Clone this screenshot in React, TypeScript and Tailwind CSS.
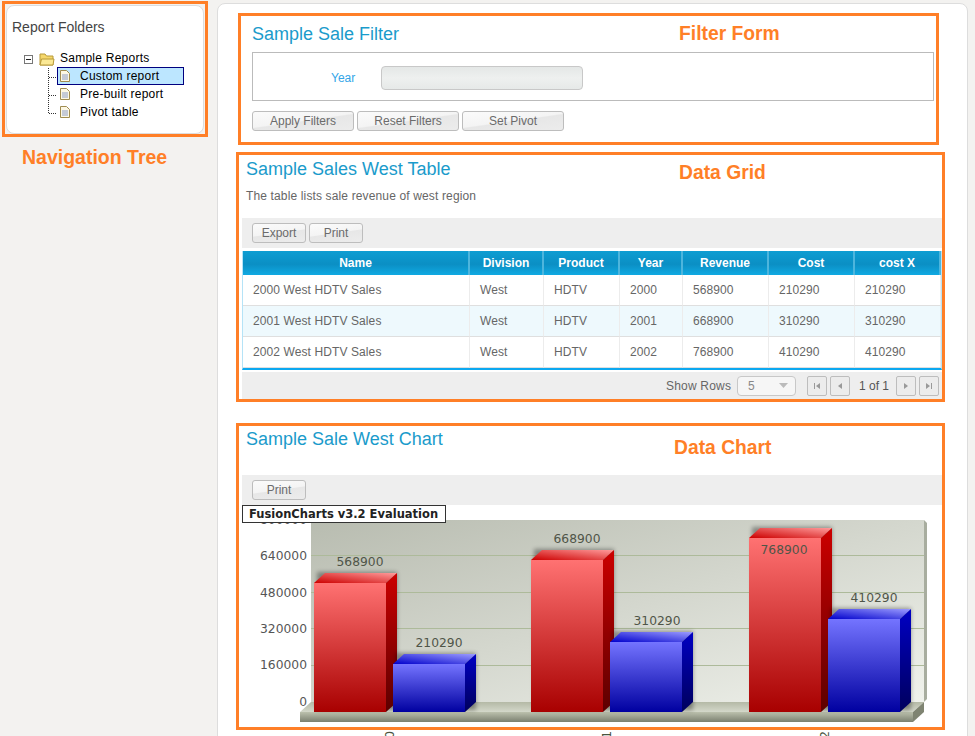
import React from 'react';

const rows = [
  { name: '2000 West HDTV Sales', year: '2000', revenue: '568900', cost: '210290' },
  { name: '2001 West HDTV Sales', year: '2001', revenue: '668900', cost: '310290' },
  { name: '2002 West HDTV Sales', year: '2002', revenue: '768900', cost: '410290' },
];

const columns = [
  { label: 'Name', width: 'w-[227px]' },
  { label: 'Division', width: 'w-[74px]' },
  { label: 'Product', width: 'w-[76px]' },
  { label: 'Year', width: 'w-[63px]' },
  { label: 'Revenue', width: 'w-[86px]' },
  { label: 'Cost', width: 'w-[86px]' },
  { label: 'cost X', width: 'w-[86px]' },
];

const bars = [
  { x: 314, top: 583, color: 'red', value: '568900', lx: 360, ly: 566 },
  { x: 393, top: 664, color: 'blue', value: '210290', lx: 439, ly: 647 },
  { x: 531, top: 560, color: 'red', value: '668900', lx: 577, ly: 543 },
  { x: 610, top: 642, color: 'blue', value: '310290', lx: 657, ly: 625 },
  { x: 749, top: 538, color: 'red', value: '768900', lx: 784, ly: 554 },
  { x: 828, top: 619, color: 'blue', value: '410290', lx: 874, ly: 602 },
];

const yLabels = [
  { v: '800000', y: 524 },
  { v: '640000', y: 560 },
  { v: '480000', y: 597 },
  { v: '320000', y: 633 },
  { v: '160000', y: 669 },
  { v: '0', y: 706 },
];

function Btn({ label, width }: { label: string; width: string }) {
  return (
    <button className={`${width} h-[20px] rounded-[3px] border border-[#bdbdbd] bg-[linear-gradient(172deg,#fbfbfb_0%,#f4f4f4_48%,#e7e7e7_52%,#ececec_100%)] text-[12px] leading-[18px] text-[#6b6b6b]`}>
      {label}
    </button>
  );
}

function PageBtn({ d }: { d: string }) {
  return (
    <span className="flex h-[20px] w-[20px] items-center justify-center rounded-[2px] border border-[#bdbdbd] bg-[#ececec]">
      <svg width="10" height="10" viewBox="0 0 10 10">
        <path d={d} fill="#999" />
      </svg>
    </span>
  );
}

function FileIcon() {
  return (
    <svg width="10" height="12" viewBox="0 0 10 12" className="shrink-0">
      <path d="M.5.5h6l3 3v8H.5z" fill="#fdf8e4" stroke="#a08c50" />
      <path d="M2 5h6M2 7h6M2 9h6" stroke="#8c9cc8" />
    </svg>
  );
}

function Tree() {
  return (
    <div className="relative -ml-[2px] mt-[13px] h-[72px] w-[180px] tracking-[0.25px]">
      <svg width="60" height="72" viewBox="0 0 60 72" className="absolute left-[14px] top-0">
        <rect x="0.5" y="6.5" width="8" height="8" fill="#fff" stroke="#777" />
        <path d="M2 10.5h5" stroke="#222" />
        <path d="M24.5 19V65M25 28.5h7M25 46.5h7M25 64.5h7" stroke="#333" strokeDasharray="1 1" />
        <path d="M16 5h5l1.500 2H29v9H16z" fill="#f5d76b" stroke="#b89a3a" />
        <path d="M16 16l1.500-6H30l-1 6z" fill="#fbe995" stroke="#b89a3a" />
      </svg>
      <div className="pl-[50px] text-[12px] leading-[18px] text-black">Sample Reports</div>
      <div className="ml-[47px] flex h-[18px] w-[127px] items-center border border-[#00007f] bg-[#bce6ff] pl-[2px] text-[12px] text-black">
        <FileIcon />
        <span className="ml-[10px]">Custom report</span>
      </div>
      <div className="ml-[50px] flex h-[18px] items-center text-[12px] text-black">
        <FileIcon />
        <span className="ml-[10px]">Pre-built report</span>
      </div>
      <div className="ml-[50px] flex h-[18px] items-center text-[12px] text-black">
        <FileIcon />
        <span className="ml-[10px]">Pivot table</span>
      </div>
    </div>
  );
}

function Chart() {
  return (
    <svg width="700" height="222" viewBox="242 505 700 222" className="block overflow-visible" style={{ fontFamily: "'DejaVu Sans', sans-serif" }}>
      <defs>
        <linearGradient id="plot" x1="0" y1="0" x2="1" y2="1">
          <stop offset="0" stopColor="#b8bcb0" />
          <stop offset="1" stopColor="#f0f2ec" />
        </linearGradient>
        <linearGradient id="floorFront" x1="0" y1="0" x2="0" y2="1">
          <stop offset="0" stopColor="#bcc1ad" />
          <stop offset="1" stopColor="#7b8070" />
        </linearGradient>
        <linearGradient id="floorTop" x1="0" y1="0" x2="0" y2="1">
          <stop offset="0" stopColor="#b4b9a6" />
          <stop offset="1" stopColor="#d4d8ca" />
        </linearGradient>
        <linearGradient id="redFront" x1="0" y1="0" x2="0" y2="1">
          <stop offset="0" stopColor="#ff7272" />
          <stop offset="1" stopColor="#a80000" />
        </linearGradient>
        <linearGradient id="redSide" x1="0" y1="0" x2="0" y2="1">
          <stop offset="0" stopColor="#cc0000" />
          <stop offset="1" stopColor="#5c0000" />
        </linearGradient>
        <linearGradient id="redTop" x1="0" y1="1" x2="1" y2="0">
          <stop offset="0" stopColor="#cc0000" />
          <stop offset="1" stopColor="#ff9c9c" />
        </linearGradient>
        <linearGradient id="blueFront" x1="0" y1="0" x2="0" y2="1">
          <stop offset="0" stopColor="#7474ff" />
          <stop offset="1" stopColor="#0000a0" />
        </linearGradient>
        <linearGradient id="blueSide" x1="0" y1="0" x2="0" y2="1">
          <stop offset="0" stopColor="#0000c4" />
          <stop offset="1" stopColor="#00005c" />
        </linearGradient>
        <linearGradient id="blueTop" x1="0" y1="1" x2="1" y2="0">
          <stop offset="0" stopColor="#0000cc" />
          <stop offset="1" stopColor="#9c9cff" />
        </linearGradient>
        <filter id="barShadow" x="-20%" y="-20%" width="140%" height="140%">
          <feGaussianBlur stdDeviation="2" />
        </filter>
      </defs>

      <path d="M922 520h2l3 3v176l-3 3h-2z" fill="#a8ad9f" />
      <rect x="311" y="520" width="613" height="182" fill="url(#plot)" />
      {[555, 592, 628, 665].map((y) => (
        <line key={y} x1="311" x2="924" y1={y + 0.5} y2={y + 0.5} stroke="#adba9a" />
      ))}

      <path d="M300 712l11-10h613l-11 10z" fill="url(#floorTop)" />
      <rect x="300" y="712" width="613" height="10" fill="url(#floorFront)" />
      <path d="M913 712l11-10v10l-11 10z" fill="#7f8472" />

      {yLabels.map((l) => (
        <text key={l.v} x="307" y={l.y} textAnchor="end" fontSize="12.3" fill="#555">
          {l.v}
        </text>
      ))}

      {bars.map((b) => (
        <g key={b.x}>
          <rect x={b.x + 3} y={b.top - 11} width={80} height={712 - b.top + 9} fill="#000" opacity="0.35" filter="url(#barShadow)" />
          <path d={`M${b.x} ${b.top}l11-10h72l-11 10z`} fill={b.color === 'red' ? 'url(#redTop)' : 'url(#blueTop)'} />
          <path d={`M${b.x + 72} ${b.top}l11-10V702l-11 10z`} fill={b.color === 'red' ? 'url(#redSide)' : 'url(#blueSide)'} />
          <rect x={b.x} y={b.top} width="72" height={712 - b.top} fill={b.color === 'red' ? 'url(#redFront)' : 'url(#blueFront)'} />
        </g>
      ))}
      {bars.map((b) => (
        <text key={b.value} x={b.lx} y={b.ly} textAnchor="middle" fontSize="12.3" fill="#4f5548">
          {b.value}
        </text>
      ))}

      {[
        { t: '2000', x: 394 },
        { t: '2001', x: 611 },
        { t: '2002', x: 829 },
      ].map((l) => (
        <text key={l.t} transform={`translate(${l.x},731) rotate(-90)`} textAnchor="end" fontSize="12.3" fill="#4a5540">
          {l.t}
        </text>
      ))}
    </svg>
  );
}

export default function App() {
  return (
    <div className="flex h-[736px] w-[975px] overflow-hidden bg-[#f3f2f0] [font-family:'Liberation_Sans',Arial,sans-serif]">
      <aside className="w-[217px] shrink-0 pl-[2px] pt-[1px]">
        <div className="h-[136px] w-[206px] border-[3px] border-[#ff7f27] bg-[#f3f2f0] p-px">
          <div className="h-[129px] rounded-[8px] border border-[#dddddd] bg-white pl-[5px] pt-[12px]">
            <div className="text-[14px] leading-[18px] text-[#444]">Report Folders</div>
            <Tree />
          </div>
        </div>
        <div className="ml-[20px] mt-[9px] text-[19.5px] font-bold leading-[22px] text-[#ff7f27]">Navigation Tree</div>
      </aside>

      <main className="mt-[3px] h-[760px] w-[751px] shrink-0 rounded-t-[8px] border border-[#dddddd] bg-white">
        {/* filter */}
        <section className="relative ml-[20px] mt-[9px] h-[132px] w-[701px] border-[3px] border-[#ff7f27] pl-[11px] pt-[8px]">
          <div className="text-[18px] leading-[20px] text-[#1a9bcb]">Sample Sale Filter</div>
          <div className="absolute left-[438px] top-[7px] text-[19.3px] font-bold leading-[22px] text-[#ff7f27]">Filter Form</div>
          <div className="mt-[8px] flex h-[49px] w-[682px] items-center border border-[#bbbbbb] pl-[78px] pt-[3px]">
            <span className="w-[50px] text-[12px] text-[#33a6e8]">Year</span>
            <div className="h-[24px] w-[202px] rounded-[4px] border border-[#c8c8c8] bg-[linear-gradient(180deg,#e4e7e6,#eef0ef_50%,#e6e9e8)]" />
          </div>
          <div className="mt-[10px] flex gap-[3px]">
            <Btn label="Apply Filters" width="w-[102px]" />
            <Btn label="Reset Filters" width="w-[102px]" />
            <Btn label="Set Pivot" width="w-[102px]" />
          </div>
        </section>

        {/* grid */}
        <section className="relative ml-[18px] mt-[7px] h-[250px] w-[709px] border-[3px] border-[#ff7f27] pl-[3px]">
          <div className="ml-[4px] mt-[4px] text-[18px] leading-[20px] text-[#1a9bcb]">Sample Sales West Table</div>
          <div className="absolute left-[440px] top-[7px] text-[19.3px] font-bold leading-[22px] text-[#ff7f27]">Data Grid</div>
          <div className="ml-[4px] mt-[9px] text-[12px] leading-[16px] tracking-[0.14px] text-[#666]">The table lists sale revenue of west region</div>
          <div className="mt-[14px] flex h-[30px] items-center gap-[3px] bg-[#eeeeee] pl-[10px]">
            <Btn label="Export" width="w-[54px]" />
            <Btn label="Print" width="w-[54px]" />
          </div>
          <table className="mt-[3px] w-[700px] table-fixed border-separate border-spacing-0 border-b-2 border-l border-r border-b-[#0ca8f0] border-l-[#b5e3f7] border-r-[#b5e3f7]">
            <colgroup>
              {columns.map((c) => (
                <col key={c.label} className={c.width} />
              ))}
            </colgroup>
            <thead>
              <tr className="h-[24px] bg-[linear-gradient(180deg,#0e9dd2,#0b8fc4_55%,#10a9e2)]">
                {columns.map((c) => (
                  <th key={c.label} className="border-r-2 border-r-[#4db5dd] p-0 text-center text-[12px] font-bold text-white">
                    {c.label}
                  </th>
                ))}
              </tr>
            </thead>
            <tbody>
              {rows.map((r, i) => (
                <tr key={r.year} className={`h-[31px] text-[12px] text-[#666] ${i === 1 ? 'bg-[#eef9fd]' : 'bg-white'}`}>
                  {[r.name, 'West', 'HDTV', r.year, r.revenue, r.cost, r.cost].map((v, j) => (
                    <td key={j} className="border-b border-r border-b-[#dfdfdf] border-r-[#ececec] px-[10px] py-0 tracking-[0.1px]">
                      {v}
                    </td>
                  ))}
                </tr>
              ))}
            </tbody>
          </table>
          <div className="mt-[2px] flex h-[27px] items-center bg-[#eeeeee] pl-[424px] text-[12px] text-[#666]">
            <span className="w-[71px] tracking-[0.2px]">Show Rows</span>
            <span className="flex h-[20px] w-[59px] items-center justify-between rounded-[4px] border border-[#c8c8c8] bg-[#f6f6f6] px-[10px] text-[#888]">
              5
              <svg width="9" height="6" viewBox="0 0 9 6" className="-mr-[3px]">
                <path d="M0 0h9L4.500 5z" fill="#bbb" />
              </svg>
            </span>
            <span className="ml-[11px] flex gap-[3px]">
              <PageBtn d="M2 2h1v6H2zM8 2v6L4 5z" />
              <PageBtn d="M7 2v6L3 5z" />
            </span>
            <span className="ml-[9px] w-[37px] text-[#555]">1 of 1</span>
            <span className="flex gap-[3px]">
              <PageBtn d="M3 2v6l4-3z" />
              <PageBtn d="M2 2v6l4-3zM7 2h1v6H7z" />
            </span>
          </div>
        </section>

        {/* chart */}
        <section className="relative ml-[18px] mt-[21px] h-[307px] w-[709px] border-[3px] border-[#ff7f27] pl-[3px]">
          <div className="ml-[4px] mt-[3px] text-[18px] leading-[20px] text-[#1a9bcb]">Sample Sale West Chart</div>
          <div className="absolute left-[435px] top-[11px] text-[19.3px] font-bold leading-[22px] text-[#ff7f27]">Data Chart</div>
          <div className="mt-[26px] flex h-[30px] items-center bg-[#eeeeee] pl-[10px]">
            <Btn label="Print" width="w-[54px]" />
          </div>
          <Chart />
          <div className="absolute left-[3px] top-[79px] h-[18px] w-[204px] border border-[#333] bg-white pl-[6px] text-[11.5px] font-bold leading-[16px] text-[#222] [font-family:'DejaVu_Sans',sans-serif]">
            FusionCharts v3.2 Evaluation
          </div>
        </section>
      </main>
    </div>
  );
}
